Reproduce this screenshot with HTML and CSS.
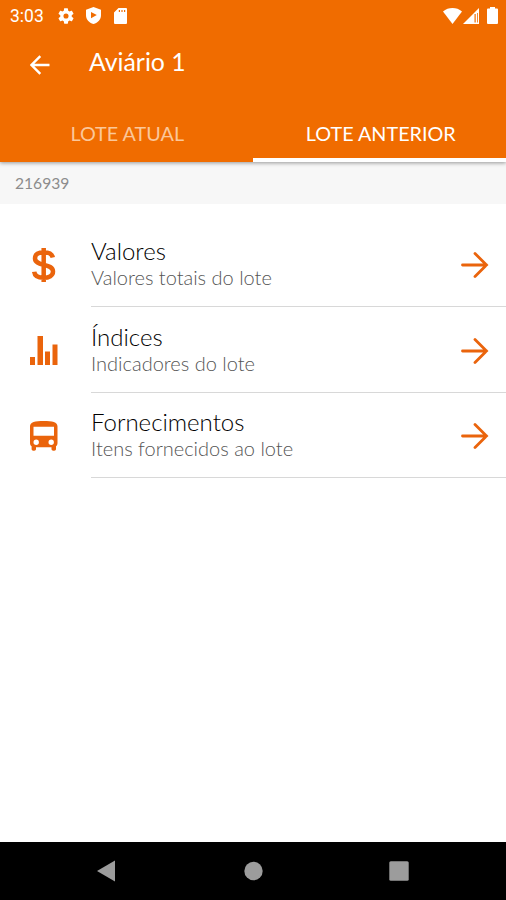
FILE: index.html
```html
<!DOCTYPE html>
<html lang="pt-BR">

<head>
    <meta charset="UTF-8">
    <meta name="viewport" content="width=device-width, initial-scale=1.0">
    <title>Aviário 1</title>
    <link rel="stylesheet" href="styles.css">
</head>

<body>
    <header class="header">
        <div class="status-bar">
            <span class="clock">3:03</span>
            <svg class="status-gear" viewBox="2 2 20 20"><path d="M19.14 12.94c.04-.3.06-.61.06-.94 0-.32-.02-.64-.07-.94l2.03-1.58a.49.49 0 0 0 .12-.61l-1.92-3.32a.49.49 0 0 0-.59-.22l-2.39.96a7 7 0 0 0-1.62-.94l-.36-2.54a.48.48 0 0 0-.48-.41h-3.84c-.24 0-.43.17-.47.41l-.36 2.54c-.59.24-1.13.57-1.62.94l-2.39-.96a.48.48 0 0 0-.59.22L2.74 8.87a.48.48 0 0 0 .12.61l2.03 1.58a6 6 0 0 0 0 1.88l-2.03 1.58a.49.49 0 0 0-.12.61l1.92 3.32c.12.22.37.29.59.22l2.39-.96c.5.38 1.03.7 1.62.94l.36 2.54c.05.24.24.41.48.41h3.84c.24 0 .44-.17.47-.41l.36-2.54a7 7 0 0 0 1.62-.94l2.39.96c.22.08.47 0 .59-.22l1.92-3.32a.48.48 0 0 0-.12-.61zM12 15.2a3.2 3.2 0 1 1 0-6.4 3.2 3.2 0 0 1 0 6.4z"/></svg>
            <svg class="status-shield" viewBox="0 0 15 17"><path fill-rule="evenodd" d="M7.5 0 15 2.8v5.4c0 4-3 7.6-7.5 8.8C3 15.8 0 12.2 0 8.2V2.8zM5 5v6.2l5.8-3.1z"/></svg>
            <svg class="status-sd" viewBox="0 0 13 16"><path fill-rule="evenodd" d="M4.5 0H12a1 1 0 0 1 1 1v14a1 1 0 0 1-1 1H1a1 1 0 0 1-1-1V4.500zM4.800 2v2h1.200V2zm2.600 0v2h1.200V2zM10 2v2h1.200V2z"/></svg>
            <span class="spacer"></span>
            <svg class="status-wifi" viewBox="0 0 19 16"><path d="M0 3.5C5.4-1.1 13.6-1.1 19 3.500L9.500 16z"/></svg>
            <svg class="status-signal" viewBox="0 0 16 16"><path fill-rule="evenodd" d="M16 0v16H0zM11.500 6v8.500h1.200V6zM14 5v9.500h.8V5z"/></svg>
            <svg class="status-battery" viewBox="0 0 11 17"><path d="M3 0h5v1.500h2a1 1 0 0 1 1 1V16a1 1 0 0 1-1 1H1a1 1 0 0 1-1-1V2.500a1 1 0 0 1 1-1h2z"/></svg>
        </div>
        <div class="toolbar">
            <svg class="back" viewBox="0 0 20 20"><path d="M19.5 10H2M10.300 1.200 1.500 10l8.800 8.800"/></svg>
            <h1 class="title">Aviário 1</h1>
        </div>
        <nav class="tabs">
            <div class="tab">LOTE ATUAL</div>
            <div class="tab active">LOTE ANTERIOR</div>
        </nav>
    </header>

    <div class="lot-number">216939</div>

    <main class="list">
        <div class="item">
            <svg class="icon" viewBox="0 0 28 36"><path class="line" d="M22.800 10.500C22 6.500 18.500 5.200 13.700 5.200c-5 0-8.700 2-8.700 6 0 4.400 4.200 5.400 8.700 6.600s9.300 2.300 9.300 6.700c0 4.200-4.200 6.300-9.300 6.300-5.300 0-9-1.800-9.500-6.100M13.700 1v34"/></svg>
            <div class="content">
                <div class="texts">
                    <h2>Valores</h2>
                    <p>Valores totais do lote</p>
                </div>
                <svg class="arrow" viewBox="0 0 28 26"><path d="M1.500 13h24M14 1.500 25.500 13 14 24.500"/></svg>
            </div>
        </div>
        <div class="item">
            <svg class="icon" viewBox="0 0 28 36"><path d="M0 24h5v8H0zM7.500 3H13v29H7.500zM15 18.500h5V32h-5zM22.500 11.500h5V32h-5z"/></svg>
            <div class="content">
                <div class="texts">
                    <h2>Índices</h2>
                    <p>Indicadores do lote</p>
                </div>
                <svg class="arrow" viewBox="0 0 28 26"><path d="M1.500 13h24M14 1.500 25.500 13 14 24.500"/></svg>
            </div>
        </div>
        <div class="item">
            <svg class="icon" viewBox="0 0 28 36"><path fill-rule="evenodd" d="M0 8.500C0 4 5 3 13.700 3s13.800 1 13.800 5.500V25c0 1.500-.6 2.500-1.500 3.300V31c0 1-.7 1.700-1.700 1.700h-1c-1 0-1.800-.7-1.800-1.700v-1.700H6V31c0 1-.7 1.700-1.700 1.700h-1c-1 0-1.700-.7-1.700-1.700v-2.700C.6 27.500 0 26.500 0 25zM3.500 8.700v9.100H24V8.700zM6.200 21.600a2.700 2.700 0 1 0 0 5.400 2.700 2.700 0 0 0 0-5.400zm15 0a2.700 2.700 0 1 0 0 5.400 2.700 2.700 0 0 0 0-5.400z"/></svg>
            <div class="content">
                <div class="texts">
                    <h2>Fornecimentos</h2>
                    <p>Itens fornecidos ao lote</p>
                </div>
                <svg class="arrow" viewBox="0 0 28 26"><path d="M1.500 13h24M14 1.500 25.500 13 14 24.500"/></svg>
            </div>
        </div>
    </main>

    <footer class="nav-bar">
        <svg viewBox="0 0 20 22"><path d="M18 .5v21L0 11z"/></svg>
        <svg viewBox="0 0 20 22"><circle cx="10.500" cy="11" r="9.200"/></svg>
        <svg viewBox="0 0 20 22"><rect x=".3" y="1.300" width="19.400" height="19.400" rx="1.500"/></svg>
    </footer>
</body>

</html>
```
FILE: styles.css
```css
* {
    box-sizing: border-box;
}

body {
    display: flex;
    flex-direction: column;
    height: 900px;
    margin: 0;
    background: #fff;
    font-family: Lato, sans-serif;
    overflow: hidden;
}

h1,
h2,
p {
    margin: 0;
    font-weight: 400;
}

svg {
    display: block;
    flex: none;
}

.header {
    position: relative;
    height: 162px;
    background: #f06c00;
    color: #fff;
    box-shadow: 0 1px 4px rgba(0, 0, 0, 0.4);
}

.status-bar {
    display: flex;
    align-items: center;
    height: 31px;
    padding: 0 8px 0 10px;
    fill: #fff;
}

.clock {
    width: 48px;
    font-family: Roboto, sans-serif;
    font-size: 17.5px;
}

.status-gear {
    width: 16px;
    height: 16px;
}

.status-shield {
    width: 15px;
    height: 17px;
    margin-left: 12px;
}

.status-sd {
    width: 13px;
    height: 16px;
    margin-left: 13px;
}

.spacer {
    flex: 1;
}

.status-wifi {
    width: 19px;
    height: 16px;
}

.status-signal {
    width: 16px;
    height: 16px;
    margin-left: 1px;
}

.status-battery {
    width: 11px;
    height: 17px;
    margin-left: 8px;
}

.toolbar {
    display: flex;
    align-items: center;
    height: 65px;
    padding-left: 30px;
}

.back {
    width: 20px;
    height: 20px;
    margin-top: 2px;
    fill: none;
    stroke: #fff;
    stroke-width: 2.4;
}

.title {
    margin: 0 0 4px 39px;
    font-size: 24.8px;
    line-height: 30px;
}

.tabs {
    display: flex;
    height: 66px;
}

.tab {
    flex: 1;
    padding: 25px 0 0 2px;
    border-bottom: 4px solid transparent;
    font-size: 19.8px;
    line-height: 24px;
    text-align: center;
    color: #fbc79a;
}

.tab.active {
    padding-left: 3px;
    border-color: #fff;
    color: #fff;
}

.lot-number {
    height: 42px;
    padding: 10px 15px 0;
    background: #f7f7f7;
    color: #8c8c8c;
    font-size: 15.6px;
    line-height: 22px;
}

.list {
    flex: 1;
    padding-top: 18px;
}

.item {
    display: flex;
    align-items: center;
    height: 85.4px;
    padding-left: 30px;
}

.icon {
    width: 28px;
    height: 36px;
    margin-top: 1px;
    fill: #ea640c;
}

.icon .line {
    fill: none;
    stroke: #ea640c;
    stroke-width: 4.5;
}

.content {
    display: flex;
    flex: 1;
    align-items: center;
    height: 100%;
    margin-left: 33px;
    padding-right: 17px;
    border-bottom: 1px solid #d8d8d8;
}

.texts {
    flex: 1;
}

h2 {
    color: #000;
    font-size: 24px;
    font-weight: 300;
    line-height: 26px;
}

p {
    color: #555;
    font-size: 20px;
    font-weight: 300;
    line-height: 26px;
}

.arrow {
    width: 28px;
    height: 26px;
    margin-top: 2px;
    fill: none;
    stroke: #ea640c;
    stroke-width: 2.8;
    stroke-linecap: round;
}

.nav-bar {
    display: flex;
    align-items: center;
    justify-content: space-between;
    height: 58px;
    padding: 0 97px;
    background: #000;
    fill: #9c9c9c;
}

.nav-bar svg {
    width: 20px;
    height: 22px;
}
```
